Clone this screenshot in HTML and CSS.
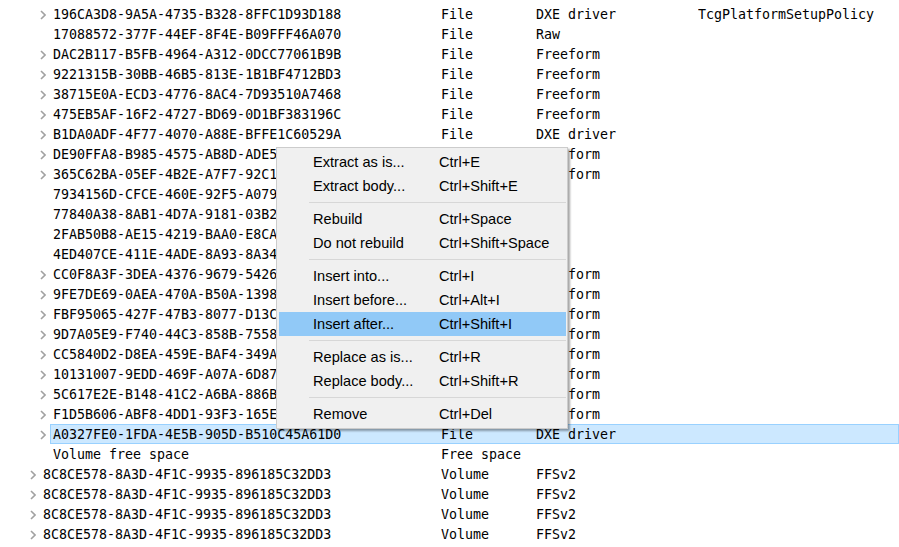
FILE: index.html
```html
<!DOCTYPE html>
<html>
<head>
<meta charset="utf-8">
<link rel="stylesheet" href="styles.css">
</head>
<body>
<div class="tree">
  <div class="row l2"><span class="exp"><svg width="6" height="10" viewBox="0 0 6 10"><polyline points="1,1 5,5 1,9"/></svg></span><div class="cells"><span>196CA3D8-9A5A-4735-B328-8FFC1D93D188</span><span>File</span><span>DXE driver</span><span>TcgPlatformSetupPolicy</span></div></div>
  <div class="row l2"><span class="exp"></span><div class="cells"><span>17088572-377F-44EF-8F4E-B09FFF46A070</span><span>File</span><span>Raw</span><span></span></div></div>
  <div class="row l2"><span class="exp"><svg width="6" height="10" viewBox="0 0 6 10"><polyline points="1,1 5,5 1,9"/></svg></span><div class="cells"><span>DAC2B117-B5FB-4964-A312-0DCC77061B9B</span><span>File</span><span>Freeform</span><span></span></div></div>
  <div class="row l2"><span class="exp"><svg width="6" height="10" viewBox="0 0 6 10"><polyline points="1,1 5,5 1,9"/></svg></span><div class="cells"><span>9221315B-30BB-46B5-813E-1B1BF4712BD3</span><span>File</span><span>Freeform</span><span></span></div></div>
  <div class="row l2"><span class="exp"><svg width="6" height="10" viewBox="0 0 6 10"><polyline points="1,1 5,5 1,9"/></svg></span><div class="cells"><span>38715E0A-ECD3-4776-8AC4-7D93510A7468</span><span>File</span><span>Freeform</span><span></span></div></div>
  <div class="row l2"><span class="exp"><svg width="6" height="10" viewBox="0 0 6 10"><polyline points="1,1 5,5 1,9"/></svg></span><div class="cells"><span>475EB5AF-16F2-4727-BD69-0D1BF383196C</span><span>File</span><span>Freeform</span><span></span></div></div>
  <div class="row l2"><span class="exp"><svg width="6" height="10" viewBox="0 0 6 10"><polyline points="1,1 5,5 1,9"/></svg></span><div class="cells"><span>B1DA0ADF-4F77-4070-A88E-BFFE1C60529A</span><span>File</span><span>DXE driver</span><span></span></div></div>
  <div class="row l2"><span class="exp"><svg width="6" height="10" viewBox="0 0 6 10"><polyline points="1,1 5,5 1,9"/></svg></span><div class="cells"><span>DE90FFA8-B985-4575-AB8D-ADE52C32EC45</span><span>File</span><span>Freeform</span><span></span></div></div>
  <div class="row l2"><span class="exp"><svg width="6" height="10" viewBox="0 0 6 10"><polyline points="1,1 5,5 1,9"/></svg></span><div class="cells"><span>365C62BA-05EF-4B2E-A7F7-92C1781AF4F9</span><span>File</span><span>Freeform</span><span></span></div></div>
  <div class="row l2"><span class="exp"></span><div class="cells"><span>7934156D-CFCE-460E-92F5-A07909A59ECA</span><span>File</span><span>Raw</span><span></span></div></div>
  <div class="row l2"><span class="exp"></span><div class="cells"><span>77840A38-8AB1-4D7A-9181-03B2A9C17E5C</span><span>File</span><span>Raw</span><span></span></div></div>
  <div class="row l2"><span class="exp"></span><div class="cells"><span>2FAB50B8-AE15-4219-BAA0-E8CA16E0E54A</span><span>File</span><span>Raw</span><span></span></div></div>
  <div class="row l2"><span class="exp"></span><div class="cells"><span>4ED407CE-411E-4ADE-8A93-8A345FC2A1B3</span><span>File</span><span>Raw</span><span></span></div></div>
  <div class="row l2"><span class="exp"><svg width="6" height="10" viewBox="0 0 6 10"><polyline points="1,1 5,5 1,9"/></svg></span><div class="cells"><span>CC0F8A3F-3DEA-4376-9679-5426BA0A907E</span><span>File</span><span>Freeform</span><span></span></div></div>
  <div class="row l2"><span class="exp"><svg width="6" height="10" viewBox="0 0 6 10"><polyline points="1,1 5,5 1,9"/></svg></span><div class="cells"><span>9FE7DE69-0AEA-470A-B50A-139813649189</span><span>File</span><span>Freeform</span><span></span></div></div>
  <div class="row l2"><span class="exp"><svg width="6" height="10" viewBox="0 0 6 10"><polyline points="1,1 5,5 1,9"/></svg></span><div class="cells"><span>FBF95065-427F-47B3-8077-D13C60710998</span><span>File</span><span>Freeform</span><span></span></div></div>
  <div class="row l2"><span class="exp"><svg width="6" height="10" viewBox="0 0 6 10"><polyline points="1,1 5,5 1,9"/></svg></span><div class="cells"><span>9D7A05E9-F740-44C3-858B-75586A8F9C8E</span><span>File</span><span>Freeform</span><span></span></div></div>
  <div class="row l2"><span class="exp"><svg width="6" height="10" viewBox="0 0 6 10"><polyline points="1,1 5,5 1,9"/></svg></span><div class="cells"><span>CC5840D2-D8EA-459E-BAF4-349A6F1E2C4D</span><span>File</span><span>Freeform</span><span></span></div></div>
  <div class="row l2"><span class="exp"><svg width="6" height="10" viewBox="0 0 6 10"><polyline points="1,1 5,5 1,9"/></svg></span><div class="cells"><span>10131007-9EDD-469F-A07A-6D87C8A3F2B1</span><span>File</span><span>Freeform</span><span></span></div></div>
  <div class="row l2"><span class="exp"><svg width="6" height="10" viewBox="0 0 6 10"><polyline points="1,1 5,5 1,9"/></svg></span><div class="cells"><span>5C617E2E-B148-41C2-A6BA-886B3A1C2D4E</span><span>File</span><span>Freeform</span><span></span></div></div>
  <div class="row l2"><span class="exp"><svg width="6" height="10" viewBox="0 0 6 10"><polyline points="1,1 5,5 1,9"/></svg></span><div class="cells"><span>F1D5B606-ABF8-4DD1-93F3-165E9F2C3B7A</span><span>File</span><span>Freeform</span><span></span></div></div>
  <div class="row l2 sel"><span class="exp"><svg width="6" height="10" viewBox="0 0 6 10"><polyline points="1,1 5,5 1,9"/></svg></span><div class="cells"><span>A0327FE0-1FDA-4E5B-905D-B510C45A61D0</span><span>File</span><span>DXE driver</span><span></span></div></div>
  <div class="row l2"><span class="exp"></span><div class="cells"><span>Volume free space</span><span>Free space</span><span></span><span></span></div></div>
  <div class="row l1"><span class="exp"><svg width="6" height="10" viewBox="0 0 6 10"><polyline points="1,1 5,5 1,9"/></svg></span><div class="cells"><span>8C8CE578-8A3D-4F1C-9935-896185C32DD3</span><span>Volume</span><span>FFSv2</span><span></span></div></div>
  <div class="row l1"><span class="exp"><svg width="6" height="10" viewBox="0 0 6 10"><polyline points="1,1 5,5 1,9"/></svg></span><div class="cells"><span>8C8CE578-8A3D-4F1C-9935-896185C32DD3</span><span>Volume</span><span>FFSv2</span><span></span></div></div>
  <div class="row l1"><span class="exp"><svg width="6" height="10" viewBox="0 0 6 10"><polyline points="1,1 5,5 1,9"/></svg></span><div class="cells"><span>8C8CE578-8A3D-4F1C-9935-896185C32DD3</span><span>Volume</span><span>FFSv2</span><span></span></div></div>
  <div class="row l1"><span class="exp"><svg width="6" height="10" viewBox="0 0 6 10"><polyline points="1,1 5,5 1,9"/></svg></span><div class="cells"><span>8C8CE578-8A3D-4F1C-9935-896185C32DD3</span><span>Volume</span><span>FFSv2</span><span></span></div></div>
</div>

<div class="menu">
  <div class="item"><span class="label">Extract as is...</span><span class="key">Ctrl+E</span></div>
  <div class="item"><span class="label">Extract body...</span><span class="key">Ctrl+Shift+E</span></div>
  <div class="sep"></div>
  <div class="item"><span class="label">Rebuild</span><span class="key">Ctrl+Space</span></div>
  <div class="item"><span class="label">Do not rebuild</span><span class="key">Ctrl+Shift+Space</span></div>
  <div class="sep"></div>
  <div class="item"><span class="label">Insert into...</span><span class="key">Ctrl+I</span></div>
  <div class="item"><span class="label">Insert before...</span><span class="key">Ctrl+Alt+I</span></div>
  <div class="item hot"><span class="label">Insert after...</span><span class="key">Ctrl+Shift+I</span></div>
  <div class="sep"></div>
  <div class="item"><span class="label">Replace as is...</span><span class="key">Ctrl+R</span></div>
  <div class="item"><span class="label">Replace body...</span><span class="key">Ctrl+Shift+R</span></div>
  <div class="sep"></div>
  <div class="item"><span class="label">Remove</span><span class="key">Ctrl+Del</span></div>
</div>
</body>
</html>
```

FILE: styles.css
```css
html, body {
  margin: 0;
  padding: 0;
  background: #ffffff;
  width: 899px;
  height: 547px;
  overflow: hidden;
}

.tree {
  padding-top: 4px;
  font-family: "DejaVu Sans Mono", "Liberation Mono", monospace;
  font-size: 13.3px;
  color: #000;
}

.row {
  display: flex;
  height: 20px;
}

.l2 { --lead: 50px; }
.l1 { --lead: 40px; }

.exp {
  flex: 0 0 var(--lead);
  display: flex;
  align-items: center;
  justify-content: flex-end;
  padding-right: 4px;
  box-sizing: border-box;
}

.exp svg {
  display: block;
  margin-top: 1px;
}

.exp polyline {
  fill: none;
  stroke: #a2a2a2;
  stroke-width: 1.6;
}

.cells {
  flex: 1;
  display: grid;
  grid-template-columns: calc(441px - var(--lead) - 3px) 95px 162px 1fr;
  box-sizing: border-box;
  height: 20px;
  padding-left: 2px;
  padding-top: 1px;
  border: 1px solid transparent;
  line-height: 18px;
  white-space: nowrap;
  overflow: hidden;
}

.cells span {
  overflow: hidden;
}

.sel .cells {
  background: #cce8ff;
  border-color: #99d1ff;
}

.menu {
  position: absolute;
  left: 276px;
  top: 147px;
  width: 292px;
  box-sizing: border-box;
  padding: 2px 1px 2px 2px;
  background: #f0f0f0;
  border: 1px solid #cccccc;
  box-shadow: 2px 2px 2px rgba(0, 0, 0, 0.35);
  font-family: "Liberation Sans", Arial, sans-serif;
  font-size: 14.6px;
  color: #000;
}

.item {
  display: flex;
  height: 24px;
  line-height: 25px;
  padding-left: 34px;
  white-space: nowrap;
}

.item .label {
  width: 126px;
}

.hot {
  background: #91c9f7;
}

.sep {
  height: 1px;
  background: #d7d7d7;
  margin: 4px 0 4px 30px;
}
```
